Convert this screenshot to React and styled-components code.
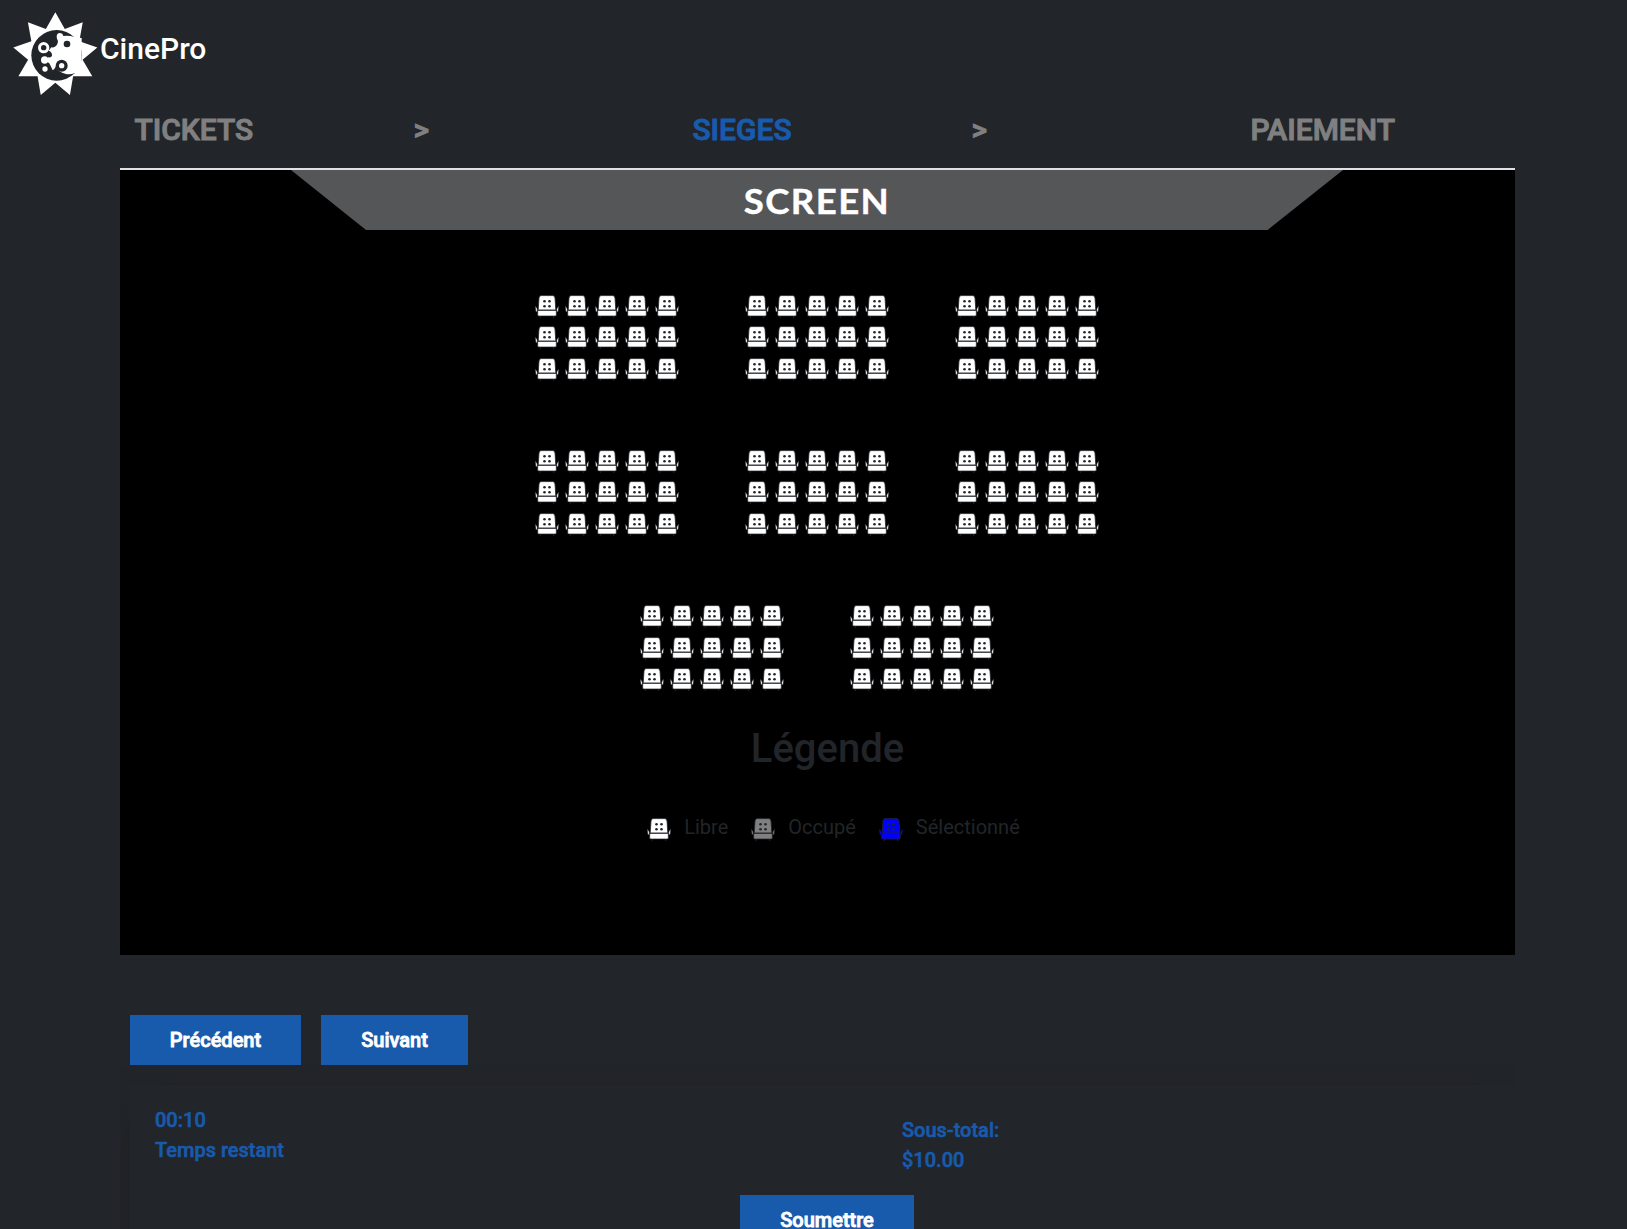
import React from "react";
import styled, { createGlobalStyle } from "styled-components";

const DARK = "#212529";
const BLUE = "#185aac";

const GlobalStyle = createGlobalStyle`
  * { box-sizing: border-box; }
  html { overflow: hidden; }
  body {
    margin: 0;
    height: 1229px;
    overflow: hidden;
    background: #222529;
    color: ${DARK};
    font-family: Roboto, "Liberation Sans", sans-serif;
    font-size: 20px;
    line-height: 30px;
  }
`;

const Header = styled.header`
  display: flex;
  align-items: flex-start;
  height: 100px;
  padding: 8px 0 0 10px;
`;
const Brand = styled.span`
  margin: 18px 0 0 0;
  font-size: 30px;
  font-weight: 500;
  line-height: 45px;
  color: #fff;
`;
const Container = styled.main`
  width: 1395px;
  margin-left: 120px;
`;
const Steps = styled.nav`
  display: grid;
  grid-template-columns: repeat(5, 279px);
  height: 70px;
  padding-top: 6px;
  border-bottom: 2px solid #dee2e6;
`;
const Step = styled.div`
  padding-left: 14.4px;
  font-size: 30px;
  line-height: 47px;
  font-weight: 500;
  -webkit-text-stroke: 1px currentColor;
  color: ${(p) => (p.$active ? BLUE : "#808080")};
`;
const Room = styled.section`
  display: flex;
  flex-direction: column;
  align-items: center;
  height: 785px;
  background: #000;
`;
const Screen = styled.div`
  display: flex;
  align-items: center;
  justify-content: center;
  width: 1052px;
  height: 60px;
  margin-right: 1px;
  padding-top: 2px;
  background: #555658;
  clip-path: polygon(0 0, 100% 0, 976.5px 100%, 75px 100%);
  color: #fff;
  font-family: Lato, sans-serif;
  font-size: 34.5px;
  font-weight: 700;
  letter-spacing: 1.3px;
`;
const ScreenLabel = styled.span`
  transform: scaleX(1.06);
  -webkit-text-stroke: 0.4px #fff;
`;
const Blocks = styled.div`
  display: flex;
  flex-wrap: wrap;
  justify-content: center;
  gap: 60.7px 60px;
  width: 630px;
  margin: 64.8px 2px 0 0;
`;
const Block = styled.div`
  display: grid;
  grid-template-columns: repeat(5, 30px);
  grid-auto-rows: 31.5px;
  justify-items: center;
`;
const Legend = styled.section`
  display: flex;
  flex-direction: column;
  align-items: center;
  padding-left: 20px;
`;
const LegendTitle = styled.h1`
  margin: 25px 0 0;
  font-size: 40px;
  line-height: 48px;
  font-weight: 500;
`;
const LegendList = styled.div`
  display: flex;
  margin: 39px 0 0 12px;
`;
const LegendItem = styled.div`
  display: flex;
  align-items: flex-start;
  gap: 13px;
  margin-right: ${(p) => p.$gap || 0}px;
  svg { margin-top: 6px; }
`;
const Actions = styled.div`
  display: flex;
  gap: 20px;
  height: 110px;
  padding: 60px 0 0 10px;
`;
const Button = styled.button`
  width: ${(p) => p.$w}px;
  height: 50px;
  flex: none;
  padding: 0;
  border: 0;
  background: ${BLUE};
  color: #fff;
  font: 500 20px/50px Roboto, sans-serif;
  -webkit-text-stroke: 0.8px #fff;
`;
const SummaryClip = styled.section`
  height: 164px;
  padding: 20px 0 0 10px;
  overflow: hidden;
`;
const Summary = styled.div`
  width: 1385px;
  height: 300px;
  background: #222529;
  box-shadow: 0 20px 50px rgba(0, 0, 0, 0.14);
`;
const SummaryRow = styled.div`
  display: grid;
  grid-template-columns: 747px 1fr;
  height: 110px;
  padding: 20px 0 0 25px;
  align-items: start;
`;
const Info = styled.div`
  padding-top: ${(p) => p.$top || 0}px;
  color: ${BLUE};
  font-weight: 500;
  -webkit-text-stroke: 0.6px currentColor;
`;
const Submit = styled.div`
  padding-left: 610px;
`;

function Seat({ color = "#fff" }) {
  return (
    <svg width="24" height="24" viewBox="0 0 24 24">
      <path d="M6 .6H18Q19.7.8 20 3L20.8 15H3.2L4 3Q4.3.8 6 .6Z" fill={color} stroke={DARK} strokeWidth=".8" />
      <path d="M.4 11L2.2 14V16.4H.9ZM23.6 11L21.8 14V16.4H23.1Z" fill={color} stroke={DARK} strokeWidth=".3" />
      <rect x="2.7" y="15.4" width="18.6" height="5.6" rx="1" fill={color} stroke={DARK} strokeWidth=".7" />
      <path d="M5.3 21V23M18.7 21V23" stroke={DARK} />
      <g fill={DARK}>
        <circle cx="9.5" cy="6.3" r="1.3" /><circle cx="14.5" cy="6.3" r="1.3" />
        <circle cx="9.5" cy="11.3" r="1.3" /><circle cx="14.5" cy="11.3" r="1.3" />
      </g>
    </svg>
  );
}

const star = Array.from({ length: 18 }, (_, i) => {
  const r = i % 2 ? 83 : 128;
  const a = (i * 20 - 90) * Math.PI / 180;
  return `${136 + r * Math.cos(a)},${141 + r * Math.sin(a)}`;
}).join(" ");

function Logo() {
  return (
    <svg width="90" height="90" viewBox="0 0 270 270">
      <polygon points={star} fill="#fff" />
      <circle cx="140" cy="142" r="76" fill={DARK} />
      <path d="M194 87Q174 81 160 84Q158 75 149 75Q140 76 140 86L141 93Q146 98 142 108Q136 120 124 118L116 128Q127 132 126 143Q124 150 114 148L112 162L118 166Q124 178 128 187Q134 184 138 174Q141 187 151 191Q157 195 168 198Q181 201 195 195L215 195V90Z" fill="#fff" />
      <g fill="#fff">
        <circle cx="101" cy="119" r="17" />
        <circle cx="104" cy="156" r="11" />
        <circle cx="105" cy="183" r="8" />
      </g>
      <g fill={DARK}>
        <circle cx="101" cy="119" r="8" />
        <circle cx="171" cy="108" r="10" />
        <circle cx="155" cy="173" r="18" />
      </g>
      <circle cx="155" cy="173" r="8" fill="#fff" />
    </svg>
  );
}

export default function App() {
  return (
    <>
      <GlobalStyle />
      <Header><Logo /><Brand>CinePro</Brand></Header>
      <Container>
        <Steps>
          <Step>TICKETS</Step>
          <Step>&gt;</Step>
          <Step $active>SIEGES</Step>
          <Step>&gt;</Step>
          <Step>PAIEMENT</Step>
        </Steps>
        <Room>
          <Screen><ScreenLabel>SCREEN</ScreenLabel></Screen>
          <Blocks>
            {Array.from({ length: 8 }, (_, b) => (
              <Block key={b}>{Array.from({ length: 15 }, (_, s) => <Seat key={s} />)}</Block>
            ))}
          </Blocks>
          <Legend>
            <LegendTitle>Légende</LegendTitle>
            <LegendList>
              <LegendItem $gap={23}><Seat />Libre</LegendItem>
              <LegendItem $gap={23}><Seat color="#808080" />Occupé</LegendItem>
              <LegendItem><Seat color="#00f" />Sélectionné</LegendItem>
            </LegendList>
          </Legend>
        </Room>
        <Actions>
          <Button $w={171}>Précédent</Button>
          <Button $w={147}>Suivant</Button>
        </Actions>
        <SummaryClip>
          <Summary>
            <SummaryRow>
              <Info>00:10<br />Temps restant</Info>
              <Info $top={10}>Sous-total:<br />$10.00</Info>
            </SummaryRow>
            <Submit><Button $w={174}>Soumettre</Button></Submit>
          </Summary>
        </SummaryClip>
      </Container>
    </>
  );
}
